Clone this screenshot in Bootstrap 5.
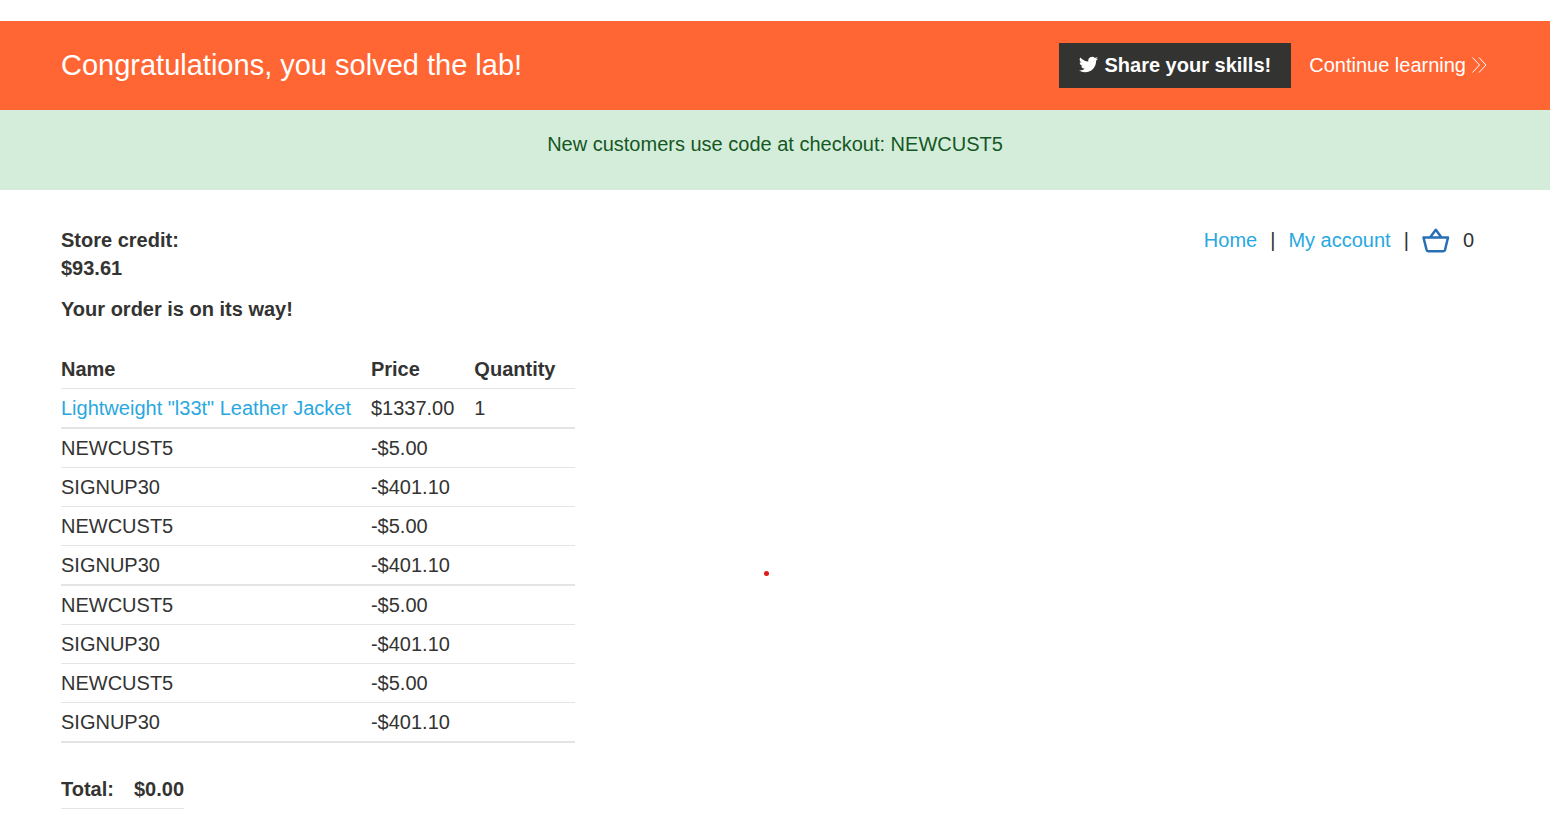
<!DOCTYPE html>
<html lang="en">
<head>
<meta charset="utf-8">
<meta name="viewport" content="width=device-width, initial-scale=1">
<title>Order confirmation</title>
<link href="https://cdn.jsdelivr.net/npm/bootstrap@5.3.0/dist/css/bootstrap.min.css" rel="stylesheet">
<style>
  body { font-family: "Liberation Sans", Arial, sans-serif; font-size: 20px; line-height: 28px; color: #333332; background: #fff; }
  a { color: #29a8e0; text-decoration: none; }
  .page-gutter { padding-left: 61px; padding-right: 61px; }
  .lab-banner { background: #ff6633; color: #fff; margin-top: 21px; padding-top: 22px; padding-bottom: 22px; }
  .lab-banner h1 { font-size: 29px; line-height: 45px; font-weight: 400; }
  .lab-actions { gap: 18px; padding-right: 2px; }
  .lab-actions a, .share-btn { height: 45px; padding-bottom: 2px; gap: 6px; color: #fff; }
  .share-btn { background: #333332; border: 0; padding: 0 20px 2px; font-weight: 700; }
  .promo { background: #d4edda; color: #155724; padding-top: 20px; height: 80px; }
  .store { padding-top: 36px; padding-bottom: 20px; }
  .store-nav { padding-right: 15px; gap: 13px; }
  .order-status { margin-top: 13px; margin-bottom: 27px; }
  .order-table th, .order-table td { padding: 5px 20px 5px 0; border-bottom: 1px solid #e4e4e4; white-space: nowrap; }
  .order-table tbody tr:nth-child(4n+1) td { border-bottom-width: 2px; }
  .order-table { margin-bottom: 27px; }
  .total-table th:last-child { padding-right: 0; }
  .pointer-dot { width: 5px; height: 5px; background: #e01818; left: 49.3%; top: 381px; }
</style>
</head>
<body>
<header class="lab-banner page-gutter d-flex flex-wrap justify-content-between align-items-center">
  <h1 class="m-0">Congratulations, you solved the lab!</h1>
  <div class="lab-actions d-flex flex-wrap align-items-center">
    <button type="button" class="share-btn d-flex align-items-center">
      <svg width="19" height="19" viewBox="0 0 24 24" fill="currentColor" aria-hidden="true"><path d="M23.95 4.57a10 10 0 0 1-2.82.77 4.96 4.96 0 0 0 2.16-2.72c-.95.55-2 .95-3.13 1.18a4.92 4.92 0 0 0-8.38 4.48C7.69 8.1 4.07 6.13 1.64 3.16a4.93 4.93 0 0 0 1.52 6.57 4.9 4.9 0 0 1-2.23-.61v.06a4.92 4.92 0 0 0 3.95 4.83 5 5 0 0 1-2.21.08 4.94 4.94 0 0 0 4.6 3.42A9.87 9.87 0 0 1 0 19.54a13.99 13.99 0 0 0 7.56 2.21c9.05 0 14-7.5 14-13.98 0-.21 0-.42-.02-.63a9.94 9.94 0 0 0 2.46-2.55z"/></svg>
      <span>Share your skills!</span>
    </button>
    <a href="#" class="d-flex align-items-center">Continue learning
      <svg width="15" height="16" viewBox="0 0 15 16" fill="none" stroke="currentColor" aria-hidden="true"><path d="M.5 .5 7.500 8 .5 15.500M7 .5 14 8 7 15.500"/></svg>
    </a>
  </div>
</header>
<div class="promo page-gutter text-center">New customers use code at checkout: NEWCUST5</div>
<main class="store page-gutter position-relative">
  <div class="d-flex flex-wrap justify-content-between align-items-start">
    <div class="fw-bold">Store credit:<br>$93.61</div>
    <nav class="store-nav d-flex align-items-center" aria-label="Store">
      <a href="#">Home</a><span>|</span><a href="#">My account</a><span>|</span>
      <a href="#" class="d-flex" aria-label="Basket"><svg width="28" height="28" viewBox="0 0 28 28" fill="none" stroke="#286fb7" stroke-width="2.500" stroke-linejoin="round" stroke-linecap="round" aria-hidden="true"><path d="M1.500 11.500H26L23 24Q22.700 25.200 21.500 25.200H6Q4.900 25.200 4.600 24ZM8 11.500 13.800 3.800 19.500 11.500"/></svg></a>
      <span>0</span>
    </nav>
  </div>
  <p class="order-status fw-bold">Your order is on its way!</p>
  <div class="overflow-auto">
    <table class="order-table">
      <thead><tr><th>Name</th><th>Price</th><th>Quantity</th></tr></thead>
      <tbody>
        <tr><td><a href="#">Lightweight "l33t" Leather Jacket</a></td><td>$1337.00</td><td>1</td></tr>
        <tr><td>NEWCUST5</td><td>-$5.00</td><td></td></tr>
        <tr><td>SIGNUP30</td><td>-$401.10</td><td></td></tr>
        <tr><td>NEWCUST5</td><td>-$5.00</td><td></td></tr>
        <tr><td>SIGNUP30</td><td>-$401.10</td><td></td></tr>
        <tr><td>NEWCUST5</td><td>-$5.00</td><td></td></tr>
        <tr><td>SIGNUP30</td><td>-$401.10</td><td></td></tr>
        <tr><td>NEWCUST5</td><td>-$5.00</td><td></td></tr>
        <tr><td>SIGNUP30</td><td>-$401.10</td><td></td></tr>
      </tbody>
    </table>
    <table class="order-table total-table mb-0">
      <tbody><tr><th scope="row">Total:</th><th>$0.00</th></tr></tbody>
    </table>
  </div>
  <span class="pointer-dot position-absolute rounded-circle"></span>
</main>
<script src="https://cdn.jsdelivr.net/npm/bootstrap@5.3.0/dist/js/bootstrap.bundle.min.js"></script>
</body>
</html>
